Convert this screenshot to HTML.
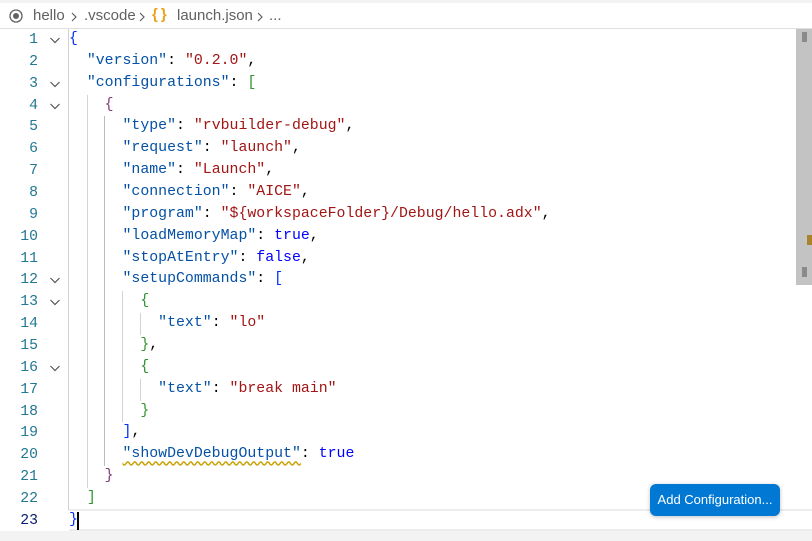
<!DOCTYPE html>
<html><head><meta charset="utf-8"><style>
*{margin:0;padding:0;box-sizing:border-box}
body{width:812px;height:541px;overflow:hidden;background:#fff;position:relative;font-family:"Liberation Sans",sans-serif}
.top{position:absolute;left:0;top:0;width:812px;height:3px;background:#f3f3f3}
.bc{position:absolute;left:0;top:3px;width:812px;height:26px;border-bottom:1px solid #e0e0e0;font-size:15px;color:#616161;line-height:26px;white-space:nowrap}
.ed{position:absolute;left:0;top:29px;width:812px;height:502px}
.ln{position:absolute;left:0;width:38px;text-align:right;color:#237893;font:14.8px/22px "Liberation Mono",monospace}
.fold{position:absolute;left:49px;width:12px;height:22px}
.code{position:absolute;left:69px;top:0;font:14.87px/21.86px "Liberation Mono",monospace;white-space:pre;color:#000}
.k{color:#0451a5}.s{color:#a31515}.b{color:#0000ff}
.b1{color:#0431fa}.b2{color:#319331}.b3{color:#863b7d}
.g{position:absolute;width:1px;background:#d3d3d3}
.bottom{position:absolute;left:0;top:531px;width:812px;height:10px;background:#f3f3f3}
</style></head><body>
<div class="top"></div>
<div class="bc">
<svg style="position:absolute;left:9px;top:6px" width="14" height="14" viewBox="0 0 14 14"><circle cx="7" cy="7" r="6" fill="none" stroke="#616161" stroke-width="1.3"/><circle cx="7" cy="7" r="3" fill="#616161"/></svg>
<span style="position:absolute;left:33px">hello</span>
<svg style="position:absolute;left:70px;top:9px" width="8" height="10" viewBox="0 0 8 10"><path d="M2 1 L6 5 L2 9" fill="none" stroke="#616161" stroke-width="1.2"/></svg>
<span style="position:absolute;left:84px">.vscode</span>
<svg style="position:absolute;left:138px;top:9px" width="8" height="10" viewBox="0 0 8 10"><path d="M2 1 L6 5 L2 9" fill="none" stroke="#616161" stroke-width="1.2"/></svg>
<span style="position:absolute;left:152px;top:-1px;color:#e8a317;font-weight:bold;font-size:15px;letter-spacing:3px">{}</span>
<span style="position:absolute;left:177px">launch.json</span>
<svg style="position:absolute;left:256px;top:9px" width="8" height="10" viewBox="0 0 8 10"><path d="M2 1 L6 5 L2 9" fill="none" stroke="#616161" stroke-width="1.2"/></svg>
<span style="position:absolute;left:269px">...</span>
</div>
<div class="ed">
<div style="position:absolute;left:68px;top:0;width:1px;height:481px;background:#d0d0d0"></div>
<div style="position:absolute;left:69px;top:480px;width:743px;height:22px;border-top:2px solid #ececec;border-bottom:2px solid #ececec"></div>
<div style="position:absolute;left:77px;top:483px;width:2px;height:18px;background:#000"></div>
<div class="g" style="left:87px;top:66px;height:393px"></div>
<div class="g" style="left:104px;top:87px;height:350px;background:#bbb"></div>
<div class="g" style="left:122px;top:262px;height:131px"></div>
<div class="g" style="left:140px;top:284px;height:22px"></div>
<div class="g" style="left:140px;top:350px;height:22px"></div>
<div style="position:absolute;left:796px;top:0;width:16px;height:256px;background:#c3c3c3"></div>
<div style="position:absolute;left:802px;top:3px;width:5px;height:10px;background:#8a8a8a"></div>
<div style="position:absolute;left:802px;top:238px;width:5px;height:10px;background:#8a8a8a"></div>
<div style="position:absolute;left:807px;top:206px;width:5px;height:10px;background:#a8842a"></div>
<div id="nums"></div>
<div class="code"><span class="b1">{</span>
  <span class="k">"version"</span>: <span class="s">"0.2.0"</span>,
  <span class="k">"configurations"</span>: <span class="b2">[</span>
    <span class="b3">{</span>
      <span class="k">"type"</span>: <span class="s">"rvbuilder-debug"</span>,
      <span class="k">"request"</span>: <span class="s">"launch"</span>,
      <span class="k">"name"</span>: <span class="s">"Launch"</span>,
      <span class="k">"connection"</span>: <span class="s">"AICE"</span>,
      <span class="k">"program"</span>: <span class="s">"${workspaceFolder}/Debug/hello.adx"</span>,
      <span class="k">"loadMemoryMap"</span>: <span class="b">true</span>,
      <span class="k">"stopAtEntry"</span>: <span class="b">false</span>,
      <span class="k">"setupCommands"</span>: <span class="b1">[</span>
        <span class="b2">{</span>
          <span class="k">"text"</span>: <span class="s">"lo"</span>
        <span class="b2">}</span>,
        <span class="b2">{</span>
          <span class="k">"text"</span>: <span class="s">"break main"</span>
        <span class="b2">}</span>
      <span class="b1">]</span>,
      <span class="k" style="text-decoration:underline wavy #c9a000;text-underline-offset:3px">"showDevDebugOutput"</span>: <span class="b">true</span>
    <span class="b3">}</span>
  <span class="b2">]</span>
<span class="b1">}</span></div>
</div>
<div style="position:absolute;left:650px;top:484px;width:130px;height:32px;background:#0078d4;border-radius:6px;color:#fff;font-size:13px;line-height:32px;text-align:center;box-shadow:0 1px 4px rgba(0,0,0,.25)">Add Configuration...</div>
<div class="bottom"></div>
<script>
var h='',folds=[1,3,4,12,13,16];
for(var i=1;i<=23;i++){var t=(i-1)*21.86;
h+='<div class="ln" style="top:'+t+'px;'+(i==23?'color:#0b216f':'')+'">'+i+'</div>';
if(folds.indexOf(i)>=0)h+='<svg class="fold" style="top:'+t+'px" viewBox="0 0 12 22"><path d="M1.5 9 L6 13.5 L10.5 9" fill="none" stroke="#555" stroke-width="1.2"/></svg>';}
document.getElementById('nums').innerHTML=h;
</script>
</body></html>
